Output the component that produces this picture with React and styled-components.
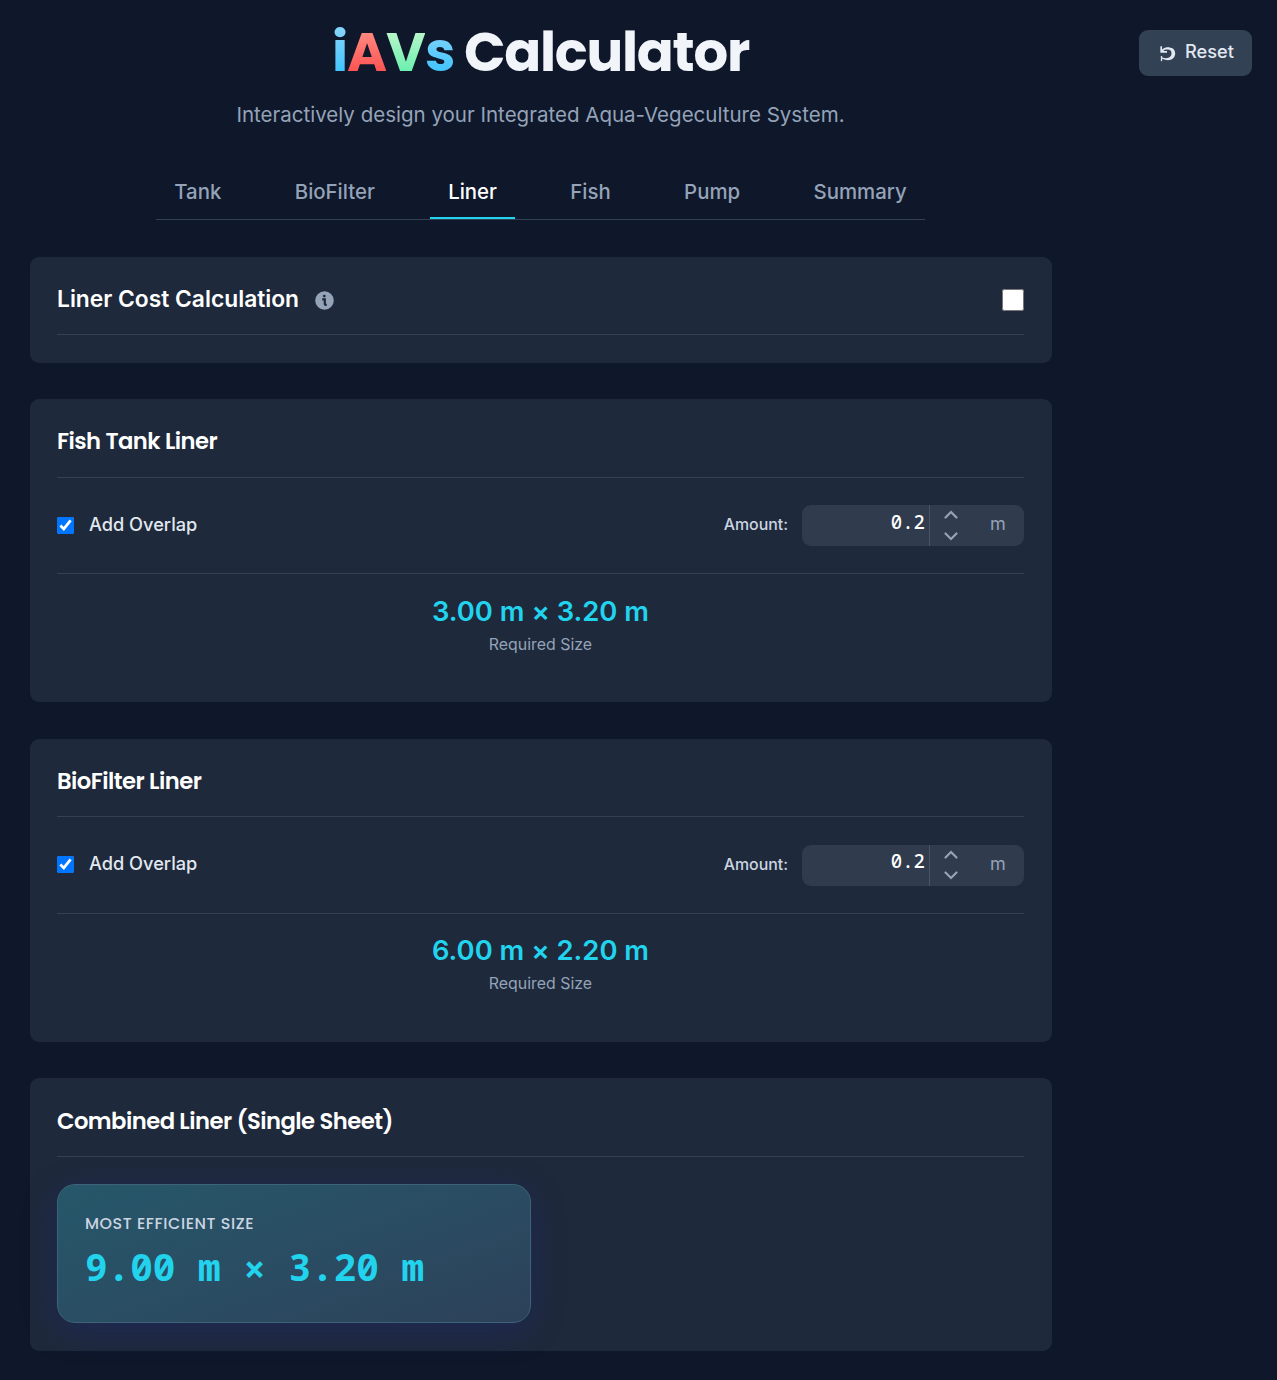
import React, { useState } from "react";
import styled, { createGlobalStyle } from "styled-components";

const GlobalStyle = createGlobalStyle`
  * { box-sizing: border-box; }
  body {
    margin: 0;
    background: #0f172a;
    color: #e2e8f0;
    font-family: Inter, "Liberation Sans", sans-serif;
    font-size: 18px;
  }
  h1, h2, p { margin: 0; }
  button, input { font: inherit; }
`;

const display = `
  font-family: Poppins, Inter, "Liberation Sans", sans-serif;
`;

const Page = styled.div`
  display: grid;
  grid-template-columns: 1022px 1fr;
  min-height: 1380px;
  padding: 0 25px 29px 30px;
`;

const Main = styled.main`
  display: flex;
  flex-direction: column;
`;

const Header = styled.header`
  display: flex;
  flex-direction: column;
  align-items: center;
  height: 164px;
  padding: 18px 1px 0 0;
`;

const Title = styled.h1`
  ${display}
  display: flex;
  height: 68px;
  line-height: 68px;
  font-size: 54.5px;
  font-weight: 700;
  letter-spacing: -1.25px;
  color: #f1f5f9;
`;

const Letter = styled.span`
  background: linear-gradient(${(p) => p.$from} 20%, ${(p) => p.$to} 80%);
  background-clip: text;
  -webkit-background-clip: text;
  color: transparent;
  width: ${(p) => p.$width}px;
`;

const Word = styled.span`
  margin-left: 10px;
`;

const Subtitle = styled.p`
  margin-top: 13px;
  line-height: 32px;
  font-size: 20.53px;
  color: #94a3b8;
  white-space: nowrap;
`;

const Tabs = styled.nav`
  display: flex;
  justify-content: space-between;
  align-self: center;
  width: 769px;
  height: 56px;
  margin-right: 1px;
  border-bottom: 1px solid #334155;
`;

const Tab = styled.button`
  height: 55px;
  padding: 2px 18.3px 0;
  border: 0;
  border-bottom: 2px solid ${(p) => (p.$active ? "#22d3ee" : "transparent")};
  background: none;
  color: ${(p) => (p.$active ? "#fff" : "#94a3b8")};
  font-size: 20.4px;
  font-weight: 500;
  cursor: pointer;
`;

const Cards = styled.div`
  display: flex;
  flex-direction: column;
  gap: 36.5px;
  margin-top: 37px;
`;

const Card = styled.section`
  height: ${(p) => p.$height}px;
  padding: 27.1px 28px 0 27px;
  border-radius: 9px;
  background: #1e293b;
`;

const CardHead = styled.div`
  display: flex;
  align-items: center;
  height: ${(p) => (p.$plain ? 51 : 51.5)}px;
  padding-bottom: ${(p) => (p.$plain ? 19.4 : 20.1)}px;
  border-bottom: 1px solid #334155;
`;

const CardTitle = styled.h2`
  ${(p) => (p.$plain ? "" : display)}
  flex: none;
  line-height: 30px;
  font-size: ${(p) => (p.$plain ? 22.8 : 22.7)}px;
  font-weight: 600;
  letter-spacing: ${(p) => (p.$plain ? 0 : -0.53)}px;
  color: #fff;
  white-space: nowrap;
`;

const InfoIcon = styled.svg`
  width: 19px;
  height: 19px;
  margin: 3px 0 0 16px;
`;

const Check = styled.input`
  width: ${(p) => p.$size}px;
  height: ${(p) => p.$size}px;
  margin: ${(p) => p.$margin || 0};
`;

const OptionRow = styled.div`
  display: flex;
  align-items: center;
  justify-content: space-between;
  height: 96.5px;
  border-bottom: 1px solid #334155;
`;

const Overlap = styled.label`
  display: flex;
  align-items: center;
  gap: 15px;
  font-size: 18.2px;
  font-weight: 500;
  color: #e2e8f0;
`;

const OverlapText = styled.span`
  padding-bottom: 3.4px;
`;

const Amount = styled.div`
  display: flex;
  align-items: center;
  gap: 14px;
  font-size: 15.9px;
  font-weight: 500;
  color: #cbd5e1;
`;

const AmountText = styled.span`
  padding-bottom: 1.3px;
`;

const Field = styled.div`
  display: flex;
  width: 222px;
  height: 41px;
  border-radius: 9px;
  background: #303b4d;
  overflow: hidden;
`;

const NumberInput = styled.input`
  width: 128px;
  height: 41px;
  padding: 0 4px 7.4px 0;
  border: 0;
  border-right: 1px solid #475569;
  outline: 0;
  background: none;
  color: #fff;
  text-align: right;
  font-family: "Noto Sans Mono", "DejaVu Sans Mono", "Liberation Mono", monospace;
  font-size: 19px;
`;

const Steps = styled.div`
  display: flex;
  flex-direction: column;
  width: 42px;
`;

const Step = styled.button`
  display: grid;
  place-items: center;
  height: 20.5px;
  padding: ${(p) => (p.$up ? "0 0 0.6px" : "1.200px 0 0")};
  border: 0;
  background: none;
  color: #94a3b8;
`;

const Unit = styled.span`
  flex: 1;
  padding-left: 18px;
  line-height: 38.6px;
  font-size: 18px;
  font-weight: 400;
  color: #94a3b8;
`;

const Result = styled.div`
  padding-top: 18.5px;
  text-align: center;
`;

const Size = styled.p`
  line-height: 36px;
  font-size: 27.4px;
  font-weight: 600;
  color: #22d3ee;
`;

const Times = styled.span`
  line-height: 0;
  vertical-align: ${(p) => p.$shift || 0}px;
`;

const Caption = styled.p`
  margin-top: 1.1px;
  line-height: 30px;
  font-size: 15.9px;
  color: #94a3b8;
`;

const Highlight = styled.div`
  width: 474px;
  height: 139px;
  margin-top: 27.2px;
  padding: 25px 27px;
  border: 1px solid #3c6476;
  border-radius: 18px;
  background: linear-gradient(160deg, #26576a 0%, #2a4d63 50%, #2c4159 100%);
  box-shadow: 0 7px 32px rgba(31, 40, 140, 0.34);
`;

const HighlightLabel = styled.p`
  ${display}
  line-height: 27px;
  font-size: 15.9px;
  font-weight: 500;
  letter-spacing: 0.56px;
  color: #cbd5e1;
`;

const HighlightValue = styled.p`
  line-height: 60px;
  font-family: "Noto Sans Mono", "DejaVu Sans Mono", "Liberation Mono", monospace;
  font-size: 37.7px;
  font-weight: 700;
  color: #22d3ee;
  white-space: nowrap;
`;

const Aside = styled.aside`
  display: flex;
  justify-content: flex-end;
  align-items: flex-start;
  padding-top: 30px;
`;

const Reset = styled.button`
  display: flex;
  align-items: center;
  gap: 9px;
  width: 113px;
  height: 46px;
  padding: 0 0 4px 21px;
  border: 0;
  border-radius: 9px;
  background: #334155;
  color: #e2e8f0;
  font-size: 18.2px;
  font-weight: 500;
`;

const ResetIcon = styled.svg`
  margin-top: 5px;
`;

const tabs = ["Tank", "BioFilter", "Liner", "Fish", "Pump", "Summary"];

function Chevron({ up }) {
  return (
    <svg width="14" height="9" viewBox="0 0 14 9" fill="none" stroke="currentColor" strokeWidth="2.2" strokeLinecap="round">
      <path d={up ? "M1.5 7.5 7 2l5.500 5.500" : "M1.500 1.500 7 7l5.500-5.500"} />
    </svg>
  );
}

function LinerCard({ title, length, width }) {
  const [amount, setAmount] = useState(0.2);
  const change = (d) => setAmount((v) => Math.max(0, Math.round((v + d) * 10) / 10));
  return (
    <Card $height={303.2}>
      <CardHead><CardTitle>{title}</CardTitle></CardHead>
      <OptionRow>
        <Overlap>
          <Check type="checkbox" defaultChecked $size={17} $margin="0 0 0.4px" />
          <OverlapText>Add Overlap</OverlapText>
        </Overlap>
        <Amount>
          <AmountText>Amount:</AmountText>
          <Field>
            <NumberInput value={amount} onChange={(e) => setAmount(Number(e.target.value) || 0)} />
            <Steps>
              <Step $up onClick={() => change(0.1)}><Chevron up /></Step>
              <Step onClick={() => change(-0.1)}><Chevron /></Step>
            </Steps>
            <Unit>m</Unit>
          </Field>
        </Amount>
      </OptionRow>
      <Result>
        <Size>{length} m <Times>×</Times> {width} m</Size>
        <Caption>Required Size</Caption>
      </Result>
    </Card>
  );
}

export default function App() {
  const [active, setActive] = useState("Liner");
  return (
    <>
      <GlobalStyle />
      <Page>
        <Main>
          <Header>
            <Title>
              <Letter $from="#81d4fa" $to="#40c4ff" $width={15}>i</Letter>
              <Letter $from="#ff8a80" $to="#ff5252" $width={39}>A</Letter>
              <Letter $from="#b9f6ca" $to="#69f0ae" $width={39}>V</Letter>
              <Letter $from="#81d4fa" $to="#40c4ff" $width={29}>s</Letter>
              <Word>Calculator</Word>
            </Title>
            <Subtitle>Interactively design your Integrated Aqua-Vegeculture System.</Subtitle>
          </Header>
          <Tabs>
            {tabs.map((t) => (
              <Tab key={t} $active={t === active} onClick={() => setActive(t)}>{t}</Tab>
            ))}
          </Tabs>
          <Cards>
            <Card $height={105.55}>
              <CardHead $plain>
                <CardTitle $plain>Liner Cost Calculation</CardTitle>
                <InfoIcon viewBox="0 0 19 19">
                  <circle cx="9.500" cy="9.500" r="9.300" fill="#94a3b8" />
                  <circle cx="9.300" cy="5.100" r="1.400" fill="#1e293b" />
                  <path d="M7.200 8.400h2.600v4.300q0 1.200 1.900 1.200" fill="none" stroke="#1e293b" strokeWidth="2.200" />
                </InfoIcon>
                <Check type="checkbox" $size={22} $margin="2px 0.4px 0 auto" />
              </CardHead>
            </Card>
            <LinerCard title="Fish Tank Liner" length="3.00" width="3.20" />
            <LinerCard title="BioFilter Liner" length="6.00" width="2.20" />
            <Card $height={272.8}>
              <CardHead><CardTitle>Combined Liner (Single Sheet)</CardTitle></CardHead>
              <Highlight>
                <HighlightLabel>MOST EFFICIENT SIZE</HighlightLabel>
                <HighlightValue>9.00 m <Times $shift={-2}>×</Times> 3.20 m</HighlightValue>
              </Highlight>
            </Card>
          </Cards>
        </Main>
        <Aside>
          <Reset>
            <ResetIcon width="16" height="17" viewBox="0 0 16 17" fill="none" stroke="currentColor">
              <path d="M1.200 1.200v5.600h5.800M1.800 6.200C4 3.200 7 2.800 9 3.200" strokeWidth="1.700" />
              <path d="M6 3C12 1 15.200 4.500 15.200 8.500 15.200 13 11 16.500 5 14.800L2 13.800V12.400c6 2 9.500-.2 9.500-4.100C11.500 5 9.500 4 6 4.600z" fill="currentColor" stroke="none" />
              <path d="M1.500 11v5.200" strokeWidth="1.300" />
            </ResetIcon>
            Reset
          </Reset>
        </Aside>
      </Page>
    </>
  );
}
